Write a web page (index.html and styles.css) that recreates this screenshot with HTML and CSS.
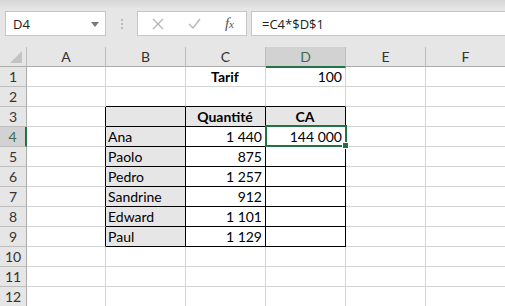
FILE: index.html
```html
<!DOCTYPE html>
<html lang="fr">

<head>
  <meta charset="UTF-8">
  <title>Classeur - Tarif</title>
  <link rel="stylesheet" href="styles.css">
</head>

<body>
  <div class="formula-row">
    <div class="namebox">
      <span>D4</span>
      <svg class="caret" width="8" height="5" viewBox="0 0 8 5"><path d="M0 0h8L4 5z" fill="#777"/></svg>
    </div>
    <div class="grip"><i></i><i></i><i></i></div>
    <div class="fbtns">
      <svg width="12" height="12" viewBox="0 0 12 12"><path d="M1 1l10 10M11 1L1 11" stroke="#b4b4b4" stroke-width="1.3"/></svg>
      <svg width="13" height="11" viewBox="0 0 13 11"><path d="M1 6l4 4 7-9" fill="none" stroke="#b4b4b4" stroke-width="1.3"/></svg>
      <span class="fx">f<sub>x</sub></span>
    </div>
    <div class="fbar">=C4*$D$1</div>
  </div>

  <div class="sheet">
    <!-- en-têtes de colonnes -->
    <div class="hd corner"><svg width="12" height="12" viewBox="0 0 12 12"><path d="M12 0v12H0z" fill="#c3c3c3"/></svg></div>
    <div class="hd">A</div>
    <div class="hd">B</div>
    <div class="hd">C</div>
    <div class="hd hd-sel">D</div>
    <div class="hd">E</div>
    <div class="hd">F</div>

    <div class="rh">1</div>
    <div class="cell"></div>
    <div class="cell"></div>
    <div class="cell ctr b">Tarif</div>
    <div class="cell num">100</div>
    <div class="cell"></div>
    <div class="cell"></div>

    <div class="rh">2</div>
    <div class="cell"></div>
    <div class="cell bk-b"></div>
    <div class="cell bk-b"></div>
    <div class="cell bk-b"></div>
    <div class="cell"></div>
    <div class="cell"></div>

    <div class="rh">3</div>
    <div class="cell bk-r"></div>
    <div class="cell t gray"></div>
    <div class="cell t gray ctr b">Quantité</div>
    <div class="cell t gray ctr b">CA</div>
    <div class="cell"></div>
    <div class="cell"></div>

    <div class="rh rh-sel">4</div>
    <div class="cell bk-r"></div>
    <div class="cell t gray">Ana</div>
    <div class="cell t num">1 440</div>
    <div class="cell t num sel">144 000</div>
    <div class="cell"></div>
    <div class="cell"></div>

    <div class="rh">5</div>
    <div class="cell bk-r"></div>
    <div class="cell t gray">Paolo</div>
    <div class="cell t num">875</div>
    <div class="cell t"></div>
    <div class="cell"></div>
    <div class="cell"></div>

    <div class="rh">6</div>
    <div class="cell bk-r"></div>
    <div class="cell t gray">Pedro</div>
    <div class="cell t num">1 257</div>
    <div class="cell t"></div>
    <div class="cell"></div>
    <div class="cell"></div>

    <div class="rh">7</div>
    <div class="cell bk-r"></div>
    <div class="cell t gray">Sandrine</div>
    <div class="cell t num">912</div>
    <div class="cell t"></div>
    <div class="cell"></div>
    <div class="cell"></div>

    <div class="rh">8</div>
    <div class="cell bk-r"></div>
    <div class="cell t gray">Edward</div>
    <div class="cell t num">1 101</div>
    <div class="cell t"></div>
    <div class="cell"></div>
    <div class="cell"></div>

    <div class="rh">9</div>
    <div class="cell bk-r"></div>
    <div class="cell t gray">Paul</div>
    <div class="cell t num">1 129</div>
    <div class="cell t"></div>
    <div class="cell"></div>
    <div class="cell"></div>

    <div class="rh">10</div>
    <div class="cell"></div>
    <div class="cell"></div>
    <div class="cell"></div>
    <div class="cell"></div>
    <div class="cell"></div>
    <div class="cell"></div>

    <div class="rh">11</div>
    <div class="cell"></div>
    <div class="cell"></div>
    <div class="cell"></div>
    <div class="cell"></div>
    <div class="cell"></div>
    <div class="cell"></div>

    <div class="rh">12</div>
    <div class="cell"></div>
    <div class="cell"></div>
    <div class="cell"></div>
    <div class="cell"></div>
    <div class="cell"></div>
    <div class="cell"></div>
  </div>
</body>

</html>
```

FILE: styles.css
```css
body {
  margin: 0;
  padding: 0;
  width: 505px;
  height: 306px;
  overflow: hidden;
  background-color: #fff;
  font-family: 'Lato', 'Liberation Sans', sans-serif;
}

/* barre de formule */
.formula-row {
  display: flex;
  align-items: stretch;
  height: 47px;
  box-sizing: border-box;
  padding: 11px 0 11px 5px;
  background: linear-gradient(#d6d6d6, #e6e6e6 9px);
  font-family: 'Open Sans', 'Liberation Sans', sans-serif;
  font-size: 13px;
  color: #222;
}

.namebox {
  width: 101px;
  box-sizing: border-box;
  background-color: #fff;
  border: 1px solid #c6c6c6;
  display: flex;
  align-items: center;
  justify-content: space-between;
  padding: 0 6px 0 7px;
}

.caret {
  margin-top: 1px;
}

.grip {
  width: 31px;
  display: flex;
  flex-direction: column;
  align-items: center;
  justify-content: center;
  gap: 2px;
}

.grip i {
  width: 2px;
  height: 2px;
  background-color: #b9b9b9;
}

.fbtns {
  width: 110px;
  box-sizing: border-box;
  background-color: #fff;
  border: 1px solid #c6c6c6;
  display: flex;
  align-items: center;
  justify-content: space-between;
  padding: 0 12px 0 14px;
}

.fx {
  font-family: 'Liberation Serif', serif;
  font-style: italic;
  font-size: 15px;
  color: #555;
  line-height: 1;
}

.fx sub {
  font-size: 11px;
  vertical-align: 0;
}

.fbar {
  flex: 1;
  margin-left: 4px;
  background-color: #fff;
  border: 1px solid #c6c6c6;
  border-right: none;
  display: flex;
  align-items: center;
  padding-left: 10px;
}

/* grille */
.sheet {
  display: grid;
  grid-template-columns: 27px 79px 80px 80px 80px 80px 80px;
  grid-auto-rows: 20px;
}

.hd,
.rh,
.cell {
  box-sizing: border-box;
  display: flex;
  border-right: 1px solid #d4d4d4;
  border-bottom: 1px solid #d4d4d4;
  font-size: 14px;
}

.hd {
  background-color: #e6e6e6;
  border-right-color: #bdbdbd;
  border-bottom-color: #ababab;
  align-items: center;
  justify-content: center;
  color: #333;
}

.corner {
  align-items: flex-end;
  justify-content: flex-end;
  padding: 0 4px 3px 0;
}

.hd-sel {
  background-color: #d2d2d2;
  border-bottom: 2px solid #217346;
  color: #3d6a50;
  margin-bottom: -1px;
  position: relative;
}

.rh {
  background-color: #e6e6e6;
  border-right-color: #ababab;
  border-bottom-color: #bdbdbd;
  align-items: center;
  justify-content: center;
  color: #333;
}

.rh-sel {
  background-color: #d2d2d2;
  border-right: 2px solid #217346;
  color: #3d6a50;
}

.cell {
  align-items: flex-end;
  padding: 0 3px 1px 2px;
  line-height: 17px;
  color: #000;
  white-space: nowrap;
}

.num {
  justify-content: flex-end;
}

.ctr {
  justify-content: center;
}

.b {
  font-weight: bold;
}

.gray {
  background-color: #e7e6e6;
}

.t {
  border-right-color: #000;
  border-bottom-color: #000;
}

.bk-r {
  border-right-color: #000;
}

.bk-b {
  border-bottom-color: #000;
}

/* cellule active */
.sel {
  position: relative;
}

.sel::after {
  content: "";
  position: absolute;
  left: -1px;
  top: -2px;
  right: -2px;
  bottom: -1px;
  border: 2px solid #217346;
}

.sel::before {
  content: "";
  position: absolute;
  right: -4px;
  bottom: -3px;
  width: 5px;
  height: 5px;
  background-color: #217346;
  border: 1px solid #fff;
  z-index: 1;
}
```
